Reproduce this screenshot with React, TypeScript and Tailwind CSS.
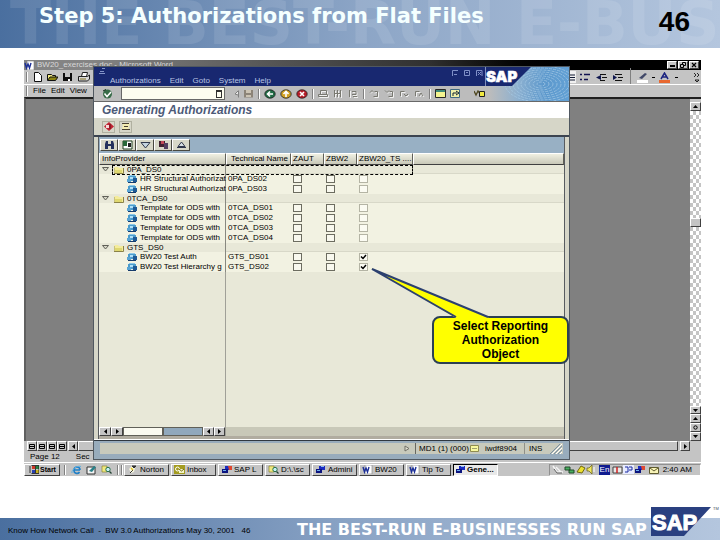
import React from "react";

const raised =
  "border border-t-white border-l-white border-b-[#404040] border-r-[#404040] bg-[#c4c4c4]";

function PixelIcon({ w = 10, h = 10, children }: { w?: number; h?: number; children: React.ReactNode }) {
  return (
    <svg width={w} height={h} viewBox={`0 0 ${w} ${h}`} className="block shrink-0" aria-hidden="true">
      {children}
    </svg>
  );
}

type ArrowDir = "up" | "down" | "left" | "right";
const arrows: Record<ArrowDir, string> = {
  up: "M0 4 L2.5 1 L5 4Z",
  down: "M0 1 L2.5 4 L5 1Z",
  left: "M4 0 L1 2.5 L4 5Z",
  right: "M1 0 L4 2.5 L1 5Z",
};
function Arrow({ dir }: { dir: ArrowDir }) {
  return (
    <PixelIcon w={5} h={5}>
      <path d={arrows[dir]} fill="#000" />
    </PixelIcon>
  );
}

function ScrollButton({ dir, label, className = "" }: { dir: ArrowDir; label: string; className?: string }) {
  return (
    <button aria-label={label} className={`flex items-center justify-center ${raised} ${className}`}>
      <Arrow dir={dir} />
    </button>
  );
}

function Separator() {
  return <span className="h-[10px] w-[2px] shrink-0 border-l border-[#808080] bg-white" />;
}

function FolderIcon() {
  return (
    <PixelIcon w={11} h={8}>
      <path d="M1 7V2l1-1h3l1 1h4v5z" fill="#f4ec9c" />
      <path d="M2 4h7v3H2z" fill="#dfd870" />
      <path d="M10.5 2v5.5H1" stroke="#8a8248" fill="none" />
      <path d="M1.5 7V2" stroke="#c8c080" />
    </PixelIcon>
  );
}

function CubeIcon() {
  return (
    <PixelIcon w={11} h={8}>
      <path d="M2 0h6v2H2z" fill="#8cc8e8" />
      <path d="M1 1h8v5H1z" fill="#4c9ccc" />
      <path d="M0 4h4v3H0z" fill="#58a4d4" />
      <path d="M6 3h4v4H6z" fill="#1f5a96" />
      <path d="M1 7.500h8" stroke="#163c6c" />
      <path d="M3 2h3v2H3z" fill="#b0e0f8" />
    </PixelIcon>
  );
}

function TaskIcon({ kind }: { kind: string }) {
  if (kind === "word")
    return (
      <PixelIcon w={11} h={9}>
        <path d="M3 0h7v9H3z" fill="#fff" stroke="#808080" strokeWidth="0.6" />
        <path d="M1 2l1.5 5L4 3l1.5 4L7 2" stroke="#1c2f98" strokeWidth="1.4" fill="none" />
      </PixelIcon>
    );
  if (kind === "outlook")
    return (
      <PixelIcon w={11} h={9}>
        <path d="M0 0h11v9H0z" fill="#a49c20" />
        <circle cx="3.5" cy="4" r="2" fill="none" stroke="#fff" />
        <path d="M5 4h5v4H5z" fill="#f4f4c8" />
        <path d="M5 4l2.5 2L10 4" stroke="#706810" fill="none" />
      </PixelIcon>
    );
  if (kind === "norton")
    return (
      <PixelIcon w={11} h={9}>
        <path d="M2 4l3-3 3 2-1 4-3 1z" fill="#f8f8e0" />
        <path d="M5 1l4 0-2 2zM3 8l3-3" stroke="#303030" fill="#303030" />
        <path d="M4 3l2 2" stroke="#e0c020" strokeWidth="1.5" />
      </PixelIcon>
    );
  if (kind === "explorer")
    return (
      <PixelIcon w={11} h={9}>
        <path d="M1 1h5v6H1z" fill="#f0e880" stroke="#807820" strokeWidth="0.6" />
        <circle cx="7" cy="4.5" r="2.2" fill="#c8f0f4" stroke="#287048" />
        <path d="M8.5 6.5L10.5 8.5" stroke="#204030" strokeWidth="1.3" />
      </PixelIcon>
    );
  return (
    <PixelIcon w={11} h={9}>
      <path d="M4 1h6v4H4z" fill="#1c2cc0" />
      <path d="M1 4h6v4H1z" fill="#0b1480" />
      <path d="M2 5h3v1H2z" fill="#70b0f0" />
      <path d={kind === "sap" ? "M7 1h4v4H8z" : "M6 1h3v1H6z"} fill={kind === "sap" ? "#e04830" : "#90c0f0"} />
    </PixelIcon>
  );
}

type Row = { group?: boolean; name: string; tech?: string; checked?: boolean };
const rows: Row[] = [
  { group: true, name: "0PA_DS0" },
  { name: "HR Structural Authorizat", tech: "0PA_DS02" },
  { name: "HR Structural Authorizat", tech: "0PA_DS03" },
  { group: true, name: "0TCA_DS0" },
  { name: "Template for ODS with", tech: "0TCA_DS01" },
  { name: "Template for ODS with", tech: "0TCA_DS02" },
  { name: "Template for ODS with", tech: "0TCA_DS03" },
  { name: "Template for ODS with", tech: "0TCA_DS04" },
  { group: true, name: "GTS_DS0" },
  { name: "BW20 Test Auth", tech: "GTS_DS01", checked: true },
  { name: "BW20 Test Hierarchy g", tech: "GTS_DS02", checked: true },
];

const columns = ["ZAUT", "ZBW2", "ZBW20_TS ...."];

function Check({ label, on = false, faint = false }: { label: string; on?: boolean; faint?: boolean }) {
  const tone = faint
    ? "border-[#b4b4a4] bg-[#fbfbf2]"
    : "border-[#6c6c60] bg-[#f8f8ee]";
  return (
    <span className="relative block h-2 w-[9px]">
      <input
        type="checkbox"
        aria-label={label}
        defaultChecked={on}
        className={`block h-2 w-[9px] appearance-none border ${tone}`}
      />
      {on && (
        <svg viewBox="0 0 9 8" className="pointer-events-none absolute inset-0 h-2 w-[9px]" aria-hidden="true">
          <path d="M2 3.5l2 2 3-3.5" stroke="#000" strokeWidth="1.5" fill="none" />
        </svg>
      )}
    </span>
  );
}

function ProviderTable() {
  const head =
    "h-3 overflow-hidden border border-t-white border-l-white border-b-[#404040] border-r-[#606058] bg-linear-to-b from-[#f0f0e2] to-[#c8c8b8] p-0 text-left align-middle font-normal whitespace-nowrap";
  return (
    <table className="w-full table-fixed border-separate border-spacing-0 text-[8px] leading-[8px] text-black">
      <colgroup>
        <col className="w-[127px]" />
        <col className="w-[65px]" />
        <col className="w-[33px]" />
        <col className="w-[33px]" />
        <col className="w-[56px]" />
        <col />
      </colgroup>
      <thead>
        <tr>
          <th scope="col" className={`${head} pl-[2px]`}>InfoProvider</th>
          <th scope="col" className={`${head} pl-1`}>Technical Name</th>
          {columns.map((c) => (
            <th key={c} scope="col" className={`${head} pl-px`}>{c}</th>
          ))}
          <td className={head} />
        </tr>
      </thead>
      <tbody>
        {rows.map((r, i) =>
          r.group ? (
            <tr key={i}>
              <td className="relative h-[9px] border-r border-[#888880] bg-[#e8e8d8] p-0">
                <div className="flex h-[9px] items-center pl-[3px]">
                  <PixelIcon w={7} h={5}>
                    <path d="M0.5 0.5h6L3.5 4z" fill="#d8d8c8" stroke="#606058" />
                  </PixelIcon>
                  <span className="ml-1">
                    <FolderIcon />
                  </span>
                  <span className="ml-[3px] whitespace-nowrap">{r.name}</span>
                </div>
                {i === 0 && (
                  <span className="pointer-events-none absolute top-0 left-[13px] h-[10px] w-[301px] border border-dashed border-black" />
                )}
              </td>
              <td colSpan={5} className="h-[9px] border-b border-[#d8d8c8] bg-[#e8e8d8] p-0" />
            </tr>
          ) : (
            <tr key={i}>
              <td className="h-[10px] border-r border-[#888880] bg-[#f2f2e2] p-0">
                <div className="flex h-[10px] items-center pl-[28px]">
                  <CubeIcon />
                  <span className="ml-[2px] whitespace-nowrap">{r.name}</span>
                </div>
              </td>
              <td className="h-[10px] bg-[#f2f2e2] p-0 pl-[2px] whitespace-nowrap">{r.tech}</td>
              {columns.map((c, k) => (
                <td key={c} className="h-[10px] bg-[#f2f2e2] p-0 pl-[2px]">
                  <Check label={`${r.tech} ${c}`} faint={k === 2} on={k === 2 && r.checked} />
                </td>
              ))}
              <td className="h-[10px] bg-[#f2f2e2] p-0" />
            </tr>
          ),
        )}
      </tbody>
    </table>
  );
}

const gridTools: { label: string; icon: React.ReactNode }[] = [
  {
    label: "Find",
    icon: <path d="M1 9V4l1-3h2v3h3V1h2l1 3v5H7V6H4v3z" fill="#23305c" />,
  },
  {
    label: "Expand",
    icon: (
      <>
        <path d="M1 1h9v8H1z" fill="#fff" stroke="#204020" />
        <path d="M1 1h4v5H1z" fill="#286838" />
        <path d="M6 3h3v4H6z" fill="#202020" />
      </>
    ),
  },
  {
    label: "Filter",
    icon: <path d="M1 2.5h9L5.5 8z" fill="#c4d4e0" stroke="#30384c" />,
  },
  {
    label: "Collapse",
    icon: (
      <>
        <path d="M1 1h6v6H1z" fill="#402030" />
        <path d="M3 1h3v3H3z" fill="#c04858" />
        <path d="M6 3h4v6H6z" fill="#504060" />
      </>
    ),
  },
  {
    label: "Sort",
    icon: <path d="M1 7.5h9M2 6.5L5.5 2 9 6.5z" fill="#d8e0e4" stroke="#30384c" />,
  },
];

function RoundIcon({ fill, d }: { fill: string; d: string }) {
  return (
    <PixelIcon w={12} h={10}>
      <ellipse cx="6" cy="5" rx="5.2" ry="4.2" fill={fill} stroke="#202020" strokeWidth="0.8" />
      <path d={d} stroke="#fff" strokeWidth="1.6" fill="none" />
    </PixelIcon>
  );
}

function GreyDoc({ d }: { d: string }) {
  return (
    <PixelIcon w={11} h={9}>
      <path d={d} stroke="#f0f0f0" fill="none" transform="translate(1 1)" />
      <path d={d} stroke="#787870" fill="none" />
    </PixelIcon>
  );
}

function SapToolbar() {
  return (
    <div className="flex h-[15px] items-center bg-[#bcbcbc] pl-2">
      <button aria-label="Enter">
        <PixelIcon w={11} h={10}>
          <circle cx="5.5" cy="5" r="4.5" fill="#386c48" />
          <path d="M2.5 4.5l2.5 3L9 3" stroke="#fff" strokeWidth="1.5" fill="none" />
          <path d="M1 2l3-1.5" stroke="#102818" />
        </PixelIcon>
      </button>
      <div className="ml-2 flex h-[13px] w-[104px] items-center border border-[#686868] bg-[#fdfdf0]">
        <input aria-label="Command" className="h-[10px] min-w-0 flex-1 bg-transparent text-[8px] outline-none" />
        <button aria-label="Command history" className="mr-[2px] h-2 w-[6px] border border-[#303030] border-t-2" />
      </div>
      <div className="ml-[9px] flex items-center gap-1">
        <PixelIcon w={5} h={8}>
          <path d="M4.5 0.5v7M4 1L1 4l3 1" stroke="#808080" fill="#e8e8e8" />
        </PixelIcon>
        <button aria-label="Save">
          <PixelIcon w={11} h={9}>
            <path d="M1 1h9v7.5H1z" fill="#8c8478" />
            <path d="M3 1h5v3H3zM3 6h5v2H3z" fill="#ccc4b4" />
          </PixelIcon>
        </button>
        <Separator />
        <button aria-label="Back"><RoundIcon fill="#206c44" d="M9 5H4M6 2.5L3.500 5 6 7.500" /></button>
        <button aria-label="Exit"><RoundIcon fill="#d0a020" d="M6 8V3M3.500 5L6 2.500 8.500 5" /></button>
        <button aria-label="Cancel"><RoundIcon fill="#b81c28" d="M4 3l4 4M8 3L4 7" /></button>
        <Separator />
        <GreyDoc d="M2.500 5V1.500h6V5M0.500 5.500h9v2h-9z" />
        <GreyDoc d="M1.500 1v7M4.500 1v7M7.500 1v7M1 4.500h7" />
        <GreyDoc d="M1.500 1v7M4 2.500h4v3H4M5 7.500h4" />
        <Separator />
        <GreyDoc d="M1 3.500l2-2 2 2M5.500 2.500h3v5h-4" />
        <GreyDoc d="M1 1.500l2 2 2-2M5.500 2.500h3v5h-4" />
        <GreyDoc d="M1.500 7V2.500h4M5 5l2 2 2-2" />
        <GreyDoc d="M1.500 7V2.500h4M5 7l2-3 2 3" />
        <Separator />
        <button aria-label="New session">
          <PixelIcon w={11} h={9}>
            <path d="M0.500 0.500h10v8h-10z" fill="#f4f490" stroke="#282828" />
            <path d="M1 1h9v2H1z" fill="#3c8878" />
          </PixelIcon>
        </button>
        <button aria-label="Shortcut">
          <PixelIcon w={11} h={9}>
            <path d="M0.500 0.500h9v8h-9z" fill="#f0f0a8" stroke="#406880" />
            <path d="M3 7V4h4M6 2l3 2-3 2" stroke="#102030" fill="none" />
          </PixelIcon>
        </button>
      </div>
      <button aria-label="Layout menu" className="ml-[13px]">
        <PixelIcon w={12} h={8}>
          <path d="M0 1l2 4 2-4 2 3" stroke="#504820" strokeWidth="1.300" fill="none" />
          <path d="M5.500 1.500h5v5h-5z" fill="#f0e840" stroke="#202020" />
        </PixelIcon>
      </button>
    </div>
  );
}

const ripples = [4, 8, 12, 16, 20, 24, 28, 32, 36];

function SapBanner() {
  return (
    <svg viewBox="0 0 84 34" className="absolute top-0 right-0 h-[34px] w-[84px]" role="img" aria-label="SAP">
      <defs>
        <linearGradient id="water" x1="0" x2="1">
          <stop offset="0.05" stopColor="#bcbcbc" />
          <stop offset="0.4" stopColor="#8cb0d0" />
          <stop offset="0.7" stopColor="#5c98cc" />
          <stop offset="1" stopColor="#62a0d4" />
        </linearGradient>
      </defs>
      <path d="M0 0h84v34H0z" fill="url(#water)" />
      <g fill="none" stroke="#a8cce8" strokeWidth="1" strokeDasharray="3 1" opacity="0.7">
        {ripples.map((r) => (
          <ellipse key={r} cx="56" cy="17" rx={r} ry={r / 2} />
        ))}
      </g>
      <path d="M0 0h46L27 19H0z" fill="#182870" />
      <path d="M0.500 0v19" stroke="#8090c0" />
      <text x="1" y="15" fill="#fff" stroke="#fff" strokeWidth="0.500" fontSize="15" fontWeight="900" fontFamily="Inter, sans-serif">SAP</text>
    </svg>
  );
}

function SapWindow() {
  return (
    <section className="absolute top-[6px] right-[131px] left-[69px] flex flex-col border border-[#505860] bg-[#d6d6c8]">
      <div className="relative">
        <div className="flex h-[19px] flex-col bg-[#182870] text-[#b8c4e4]">
          <div className="flex h-2 items-center justify-between pr-[86px] pl-1">
            <PixelIcon w={8} h={6}>
              <path d="M1 5.500h6M2 3.500h4M4 0.500h3" stroke="#8494c8" />
            </PixelIcon>
            <span className="flex gap-[5px] pt-1">
              <PixelIcon w={7} h={7}><path d="M6 0.500H0.500V6M2 4.500h3" stroke="#8090c8" fill="none" /></PixelIcon>
              <PixelIcon w={7} h={7}><path d="M0.500 0.500h5v5h-5zM2 2.500h2" stroke="#8090c8" fill="none" /></PixelIcon>
              <PixelIcon w={7} h={7}><path d="M0.500 6V0.500H6V6M2 2l3 3M5 2L2 5" stroke="#8090c8" fill="none" /></PixelIcon>
            </span>
          </div>
          <nav className="flex h-[11px] items-center gap-[9px] pl-4 text-[8px] leading-[8px]">
            <button>Authorizations</button>
            <button>Edit</button>
            <button>Goto</button>
            <button>System</button>
            <button>Help</button>
          </nav>
        </div>
        <SapToolbar />
        <SapBanner />
      </div>
      <h2 className="h-[17px] border-t border-[#686868] bg-white pl-2 text-[12px] leading-4 font-bold text-[#4c5a78] italic">
        Generating Authorizations
      </h2>
      <div className="flex h-[17px] items-center gap-1 bg-[#d6d6c8] pl-2">
        <button aria-label="Generate" className="flex h-3 w-[13px] items-center justify-center border border-[#b0b0a0]">
          <PixelIcon w={10} h={9}>
            <path d="M5 0l5 4.500L5 9 0 4.500z" fill="#c02434" />
            <path d="M2 3h3v3H2z" fill="#f8d8d8" />
            <path d="M6 2v5" stroke="#601018" />
          </PixelIcon>
        </button>
        <button aria-label="Log" className="flex h-3 w-[13px] items-center justify-center border border-[#b0b0a0]">
          <PixelIcon w={10} h={9}>
            <path d="M2 1h7L7 8H1z" fill="#f4ecb0" />
            <path d="M1 1.500h7M3 4.500h4M1 7.500h8" stroke="#484030" />
          </PixelIcon>
        </button>
      </div>
      <div className="border-t-2 border-[#3c4450] px-1">
        <div className="border-x border-[#585c60] bg-[#e8e8d8]">
          <div className="flex h-4 items-center bg-[#98b0c4] pl-px">
            {gridTools.map((t) => (
              <button
                key={t.label}
                aria-label={t.label}
                className="flex h-3 w-[18px] items-center justify-center border border-t-white border-l-white border-b-[#484840] border-r-[#484840] bg-[#d8d8c8]"
              >
                <PixelIcon w={11} h={10}>{t.icon}</PixelIcon>
              </button>
            ))}
          </div>
          <ProviderTable />
          <div className="h-[155px]">
            <div className="h-full w-[127px] border-r border-[#a0a098]" />
          </div>
          <div className="flex h-[9px] bg-[#c8c8b8]">
            <div className="flex w-[127px] border-r border-[#a0a098] bg-[#e0e0d0]">
              <ScrollButton dir="left" label="First column" className="w-[12px]" />
              <ScrollButton dir="right" label="Scroll left" className="w-[12px]" />
              <span className="flex-1 border border-[#606058] bg-[#fafaf0]" />
              <span className="w-[40px] border border-[#606058] bg-[#90a8bc]" />
              <ScrollButton dir="left" label="Scroll right" className="w-[11px]" />
              <ScrollButton dir="right" label="Last column" className="w-[11px]" />
            </div>
          </div>
          <div className="h-[3px] bg-[#b0aca0]" />
        </div>
      </div>
      <div className="border-t border-white" />
      <footer className="border-t border-[#303840] bg-[#98acbc] px-[6px] pt-[2px] pb-[5px]">
        <div className="flex h-[11px] items-stretch justify-end bg-[#c8cabc] text-[8px] leading-[11px]">
          <span className="mr-[5px] self-center">
            <PixelIcon w={6} h={7}><path d="M1 1l4 2.500L1 6z" fill="#e0e0d0" stroke="#707068" /></PixelIcon>
          </span>
          <span className="flex w-[64px] items-center justify-between border-l border-[#686860] pl-[3px] whitespace-nowrap">
            MD1 (1) (000)
            <PixelIcon w={9} h={7}>
              <path d="M0.500 0.500h8v6h-8z" fill="#f8f8a0" stroke="#908c50" />
              <path d="M2 3.500h5" stroke="#a0a070" />
            </PixelIcon>
          </span>
          <span className="w-[45px] pl-[6px]">iwdf8904</span>
          <span className="w-6 border-l border-[#909088] pl-1">INS</span>
          <PixelIcon w={15} h={11}>
            <path d="M4 11L14 1M8 11l6-6M12 11l2-2" stroke="#fff" />
            <path d="M2 11L12 1M6 11l8-8M10 11l4-4" stroke="#7890a4" />
          </PixelIcon>
        </div>
      </footer>
    </section>
  );
}

function WordTop() {
  return (
    <>
      <div className="flex h-[10px] items-center bg-linear-to-r from-[#848484] from-10% via-[#303030] via-60% to-black to-80% pr-[2px] text-[8px] leading-[10px] text-[#d8d8d8]">
        <TaskIcon kind="word" />
        <span className="ml-[2px] flex-1 whitespace-nowrap">BW20_exercises.doc - Microsoft Word</span>
        <span className="flex gap-px">
          <button aria-label="Minimize" className={`flex h-2 w-[10px] items-end justify-center ${raised}`}>
            <PixelIcon w={5} h={3}><path d="M0 1h5" stroke="#000" strokeWidth="2" /></PixelIcon>
          </button>
          <button aria-label="Restore" className={`flex h-2 w-[10px] items-center justify-center ${raised}`}>
            <PixelIcon w={6} h={6}><path d="M2.500 2V0.500h3v3H4M0.500 2.500h3v3h-3z" stroke="#000" fill="none" /></PixelIcon>
          </button>
          <button aria-label="Close" className={`flex h-2 w-[10px] items-center justify-center ${raised}`}>
            <PixelIcon w={6} h={6}><path d="M1 1l4 4M5 1L1 5" stroke="#000" strokeWidth="1.200" /></PixelIcon>
          </button>
        </span>
      </div>
      <div className="flex h-[14px] items-center justify-between bg-[#c4c4c4] pr-px pl-[2px]">
        <div className="flex items-center gap-1">
          <Separator />
          <button aria-label="New">
            <PixelIcon w={11} h={10}><path d="M2.500 0.500h4l3 3v6h-7z" fill="#fff" stroke="#101010" /></PixelIcon>
          </button>
          <button aria-label="Open">
            <PixelIcon w={11} h={10}>
              <path d="M0.500 8V2.500h4l1 1h3V5" fill="#f0e880" stroke="#101010" />
              <path d="M0.500 8.500L3 5h8L8.500 8.500z" fill="#8c8410" stroke="#101010" />
            </PixelIcon>
          </button>
          <button aria-label="Save">
            <PixelIcon w={11} h={10}>
              <path d="M1 1h9v8H1z" fill="#101010" />
              <path d="M3 1h5v4H3z" fill="#c4c4c4" />
              <path d="M6 7h2v2H6z" fill="#fff" />
            </PixelIcon>
          </button>
          <button aria-label="Print" className="ml-px">
            <PixelIcon w={12} h={10}>
              <path d="M3.500 4.500l1-4h5l-1 4z" fill="#fff" stroke="#202020" />
              <path d="M0.500 4.500h9l2-1.500v4l-2 2h-9z" fill="#d8d8d8" stroke="#202020" />
              <path d="M2 7h6" stroke="#807020" />
            </PixelIcon>
          </button>
        </div>
        <div className="flex items-center">
          <button aria-label="Numbering" className="flex h-3 w-[13px] items-center justify-center bg-[#f0f0f0]">
            <PixelIcon w={10} h={9}><path d="M1.500 0v9M4 2h6M4 4.500h6M4 7h6" stroke="#101830" /></PixelIcon>
          </button>
          <button aria-label="Bullets" className="ml-1">
            <PixelIcon w={10} h={9}><path d="M0 1.500h2M0 6.500h2M4 1.500h6M4 6.500h4" stroke="#101050" strokeWidth="1.300" /></PixelIcon>
          </button>
          <button aria-label="Decrease indent" className="ml-[6px]">
            <PixelIcon w={12} h={9}><path d="M4 1.500h6M6 4.500h5M4 7.500h5" stroke="#101010" /><path d="M5 2v5L0 4.500z" fill="#101850" /></PixelIcon>
          </button>
          <button aria-label="Increase indent" className="ml-1">
            <PixelIcon w={12} h={9}><path d="M3 1.500h7M6 4.500h5M3 7.500h7" stroke="#101010" /><path d="M1 2v5l4-2.500z" fill="#101850" /></PixelIcon>
          </button>
          <span className="mx-[6px]"><Separator /></span>
          <button aria-label="Highlight">
            <PixelIcon w={12} h={11}><path d="M2 6l6-5 2 1-5 5z" fill="#404868" /><path d="M0 8h11v3H0z" fill="#fff" /></PixelIcon>
          </button>
          <span className="ml-[3px] h-px w-[3px] bg-black" />
          <button aria-label="Font color" className="ml-1">
            <PixelIcon w={12} h={11}><path d="M2 7l3.500-6L9 7M3.500 5h4" stroke="#1c2480" strokeWidth="1.500" fill="none" /><path d="M0 8h11v3H0z" fill="#e86830" /></PixelIcon>
          </button>
          <span className="ml-1 h-px w-[3px] bg-black" />
          <span className="ml-4">
            <PixelIcon w={6} h={9}><path d="M0 0l2 2-2 2M3 0l2 2-2 2M1 7h4L3 9z" stroke="#000" strokeWidth="0.800" fill="none" /></PixelIcon>
          </span>
        </div>
      </div>
      <nav className="flex h-[13px] items-center gap-[5px] border-t border-white bg-[#c4c4c4] pl-[2px] text-[8px] leading-[8px] text-black">
        <Separator />
        <button>File</button>
        <button>Edit</button>
        <button>View</button>
      </nav>
    </>
  );
}

function WordBody() {
  return (
    <div className="flex h-[344px] border-t-2 border-l-2 border-t-[#202020] border-l-[#606060] bg-[#808080] pl-px">
      <div className="flex-1" />
      <div className="flex w-[11px] flex-col bg-[#d8d8d8]">
        <span className="h-[3px] bg-[#c4c4c4]" />
        <ScrollButton dir="up" label="Scroll up" className="h-[9px]" />
        <div className="flex-1 bg-[repeating-conic-gradient(#c4c4c4_0_25%,#fff_0_50%)] bg-size-[6px_8px] pt-[107px]">
          <div className={`h-[9px] ${raised}`} />
        </div>
        <ScrollButton dir="down" label="Scroll down" className="h-2" />
        <ScrollButton dir="up" label="Previous page" className="h-[9px]" />
        <button aria-label="Browse object" className={`flex h-[9px] items-center justify-center ${raised}`}>
          <PixelIcon w={5} h={5}><circle cx="2.500" cy="2.500" r="1.700" fill="none" stroke="#000" /></PixelIcon>
        </button>
        <ScrollButton dir="down" label="Next page" className="h-[9px]" />
      </div>
    </div>
  );
}

const viewModes = ["Normal", "Web", "Print layout", "Outline"];

function WordBottom() {
  return (
    <>
      <div className="flex h-[10px] bg-[#c4c4c4] pl-[3px]">
        {viewModes.map((m) => (
          <button key={m} aria-label={m} className={`flex w-[10px] items-center justify-center ${raised}`}>
            <PixelIcon w={6} h={5}><path d="M0.500 0.500h5v4h-5zM1 2.500h4" stroke="#000" fill="none" /></PixelIcon>
          </button>
        ))}
        <ScrollButton dir="left" label="Scroll left" className="ml-px w-[10px]" />
        <span className={`mr-[2px] flex-1 ${raised}`} />
        <ScrollButton dir="right" label="Scroll right" className="mr-[11px] w-[10px]" />
      </div>
      <div className="flex h-[11px] items-center gap-4 bg-[#c4c4c4] pl-[6px] text-[8px] leading-[8px] text-black">
        <span>Page 12</span>
        <span>Sec</span>
      </div>
    </>
  );
}

const tasks: { label: string; icon: string; active?: boolean }[] = [
  { label: "Norton", icon: "norton" },
  { label: "Inbox", icon: "outlook" },
  { label: "SAP L", icon: "sap" },
  { label: "D:\\.\\sc", icon: "explorer" },
  { label: "Admini", icon: "gui" },
  { label: "BW20", icon: "word" },
  { label: "Tip To", icon: "word" },
  { label: "Gene...", icon: "gui", active: true },
];

function Taskbar() {
  return (
    <div className="flex h-[14px] items-center border-t border-white bg-[#c4c4c4] text-[8px] leading-[8px] text-black">
      <button className={`flex h-3 w-9 items-center gap-px pl-1 font-bold ${raised}`}>
        <PixelIcon w={10} h={9}>
          <path d="M3 1h3v3H3z" fill="#d03828" />
          <path d="M7 1h3v3H7z" fill="#288040" />
          <path d="M3 5h3v3H3z" fill="#2840b0" />
          <path d="M7 5h3v3H7z" fill="#c8b020" />
          <path d="M1 1v7M2.500 0.500h7.500M2.500 8.500h7.500M6.500 1v7M10 1v7" stroke="#101010" strokeWidth="0.800" />
        </PixelIcon>
        <span className="text-[7px]">Start</span>
      </button>
      <span className="ml-1 flex gap-px"><Separator /></span>
      <div className="ml-[5px] flex gap-1">
        <button aria-label="Internet Explorer">
          <PixelIcon w={11} h={10}>
            <path d="M9 5H3a3 3 0 0 0 5.500 2M3 5a3 3 0 0 1 6 0" stroke="#2080c8" strokeWidth="1.700" fill="none" />
            <path d="M1 8C0 5 6 0 10 1.500" stroke="#60b0e0" fill="none" />
          </PixelIcon>
        </button>
        <button aria-label="Show desktop">
          <PixelIcon w={11} h={10}>
            <path d="M1 2h8v7H1z" fill="#f4f4f4" stroke="#303030" />
            <path d="M3 6l5-5 2 1-4 5z" fill="#288088" />
          </PixelIcon>
        </button>
        <button aria-label="Explorer"><TaskIcon kind="explorer" /></button>
      </div>
      <span className="ml-[5px] flex gap-[2px]"><Separator /><Separator /></span>
      <div className="ml-px flex gap-[2px]">
        {tasks.map((t) => (
          <button
            key={t.label}
            className={
              t.active
                ? "flex h-3 w-[45px] items-center gap-px overflow-hidden border border-t-black border-l-black border-r-white border-b-white bg-[#e8e8e8] pl-px font-bold whitespace-nowrap"
                : `flex h-3 w-[45px] items-center gap-[2px] overflow-hidden pl-[2px] whitespace-nowrap ${raised}`
            }
          >
            <TaskIcon kind={t.icon} />
            {t.label}
          </button>
        ))}
      </div>
      <div className="ml-auto flex h-3 w-[152px] items-center border border-t-[#909090] border-l-[#909090] border-r-white border-b-white pl-[2px]">
        <PixelIcon w={12} h={9}><path d="M1 1l4 6h6M4 2l5 5" stroke="#f4f4f4" strokeWidth="1.400" fill="none" /><path d="M2 4l3 4h5" stroke="#606060" fill="none" /></PixelIcon>
        <PixelIcon w={12} h={9}><path d="M1 2h5v3H1zM5 5h5v3H5z" fill="#48b060" stroke="#204828" /></PixelIcon>
        <PixelIcon w={10} h={9}><path d="M1 7l4-6 4 2-3 5z" fill="#ece030" stroke="#706810" /></PixelIcon>
        <PixelIcon w={10} h={9}><path d="M1 3h2l3-3v9L3 6H1z" fill="#f0e860" stroke="#605810" strokeWidth="0.700" /><path d="M8 2v5" stroke="#fff" /></PixelIcon>
        <span className="ml-[3px] h-[10px] w-[11px] bg-[#101c90] text-center text-[8px] leading-[10px] text-white">En</span>
        <span className="ml-[2px]"><PixelIcon w={11} h={9}><path d="M1 2h9v6H1z" fill="#e8e8e8" stroke="#404040" /><path d="M5 2v6" stroke="#d02020" strokeWidth="1.500" /></PixelIcon></span>
        <PixelIcon w={11} h={9}><path d="M0 0h11v9H0z" fill="#e8ecff" /><path d="M2 2h3v5H2M6 2h3v3H6" stroke="#1828a0" fill="none" /></PixelIcon>
        <TaskIcon kind="sap" />
        <span className="ml-1"><PixelIcon w={10} h={8}><path d="M0.500 1.500h9v6h-9z" fill="#f8f4b8" stroke="#605c30" /><path d="M1 2l4 3 4-3" stroke="#605c30" fill="none" /></PixelIcon></span>
        <time className="mr-2 ml-auto whitespace-nowrap">2:40 AM</time>
      </div>
    </div>
  );
}

function Callout() {
  return (
    <div className="absolute top-[256px] left-[408px] w-[137px]">
      <div className="rounded-lg border-2 border-[#2c4054] bg-[#ffff00] py-px text-center text-[12px] leading-[14px] font-bold text-black">
        Select Reporting
        <br />
        Authorization
        <br />
        Object
      </div>
      <svg width="124" height="53" viewBox="0 0 124 53" className="absolute -top-[49px] -left-[62px]" aria-hidden="true">
        <path d="M86 51L1 1l118 50z" fill="#ffff00" />
        <path d="M86 50L2 2l116 48" stroke="#2c4070" strokeWidth="2" fill="none" />
      </svg>
    </div>
  );
}

export default function App() {
  return (
    <div className="flex min-h-screen flex-col bg-white font-['Liberation_Sans',Arial,sans-serif]">
      <header className="relative flex h-12 items-start justify-between overflow-hidden bg-linear-to-r from-[#4a6f9f] via-[#8ca5c6] via-50% to-[#b4c6de] pr-[30px] pl-[39px]">
        <span
          aria-hidden="true"
          className="absolute -top-[9px] left-[10px] font-['DejaVu_Sans',sans-serif] text-[60px] leading-[64px] font-bold whitespace-nowrap text-white/10"
        >
          THE BEST-RUN E-BUS
        </span>
        <h1 className="relative pt-1 font-['DejaVu_Sans',sans-serif] text-[21px] leading-6 font-bold whitespace-nowrap text-[#f4ffff]">
          Step 5: Authorizations from Flat Files
        </h1>
        <span className="relative pt-[6px] text-[28px] leading-8 font-bold text-black">46</span>
      </header>
      <main className="relative mt-3 mr-[19px] ml-6 flex flex-col">
        <WordTop />
        <WordBody />
        <WordBottom />
        <Taskbar />
        <SapWindow />
        <Callout />
      </main>
      <footer className="relative mt-auto flex h-[22px] items-center bg-linear-to-r from-[#4a6f9f] via-[#8ca5c6] via-50% to-[#b4c6de] pl-2">
        <p className="w-[289px] pt-1 text-[8px] leading-3 whitespace-pre text-black">
          {"Know How Network Call  -  BW 3.0 Authorizations May 30, 2001   46"}
        </p>
        <p className="pt-[2px] font-['DejaVu_Sans',sans-serif] text-[16px] leading-4 font-bold whitespace-nowrap text-white">
          THE BEST-RUN E-BUSINESSES RUN SAP
        </p>
        <svg
          width="70"
          height="32"
          viewBox="0 0 70 32"
          className="absolute right-0 bottom-[3px]"
          role="img"
          aria-label="SAP"
        >
          <path d="M1 2h60L34 31H1z" fill="#2a4080" />
          <text x="2" y="25" fill="#fff" stroke="#fff" strokeWidth="1" fontSize="22" fontWeight="bold" fontFamily="'Liberation Sans', sans-serif">SAP</text>
          <text x="63" y="5" fill="#404858" fontSize="4" fontFamily="'Liberation Sans', sans-serif">TM</text>
        </svg>
      </footer>
    </div>
  );
}
